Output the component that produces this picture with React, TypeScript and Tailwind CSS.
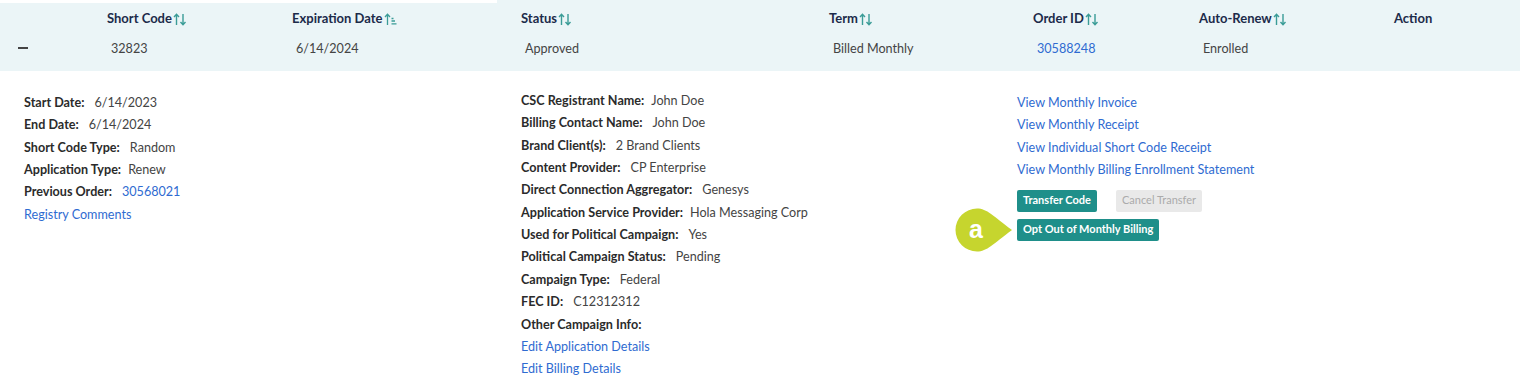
import React from "react";

const font = { fontFamily: 'Lato, "Liberation Sans", Arial, sans-serif' };

function SortBoth() {
  return (
    <svg width="14" height="13" viewBox="0 0 14 13" className="ml-[1px] inline-block" fill="none" stroke="#3a9c97" strokeWidth="1.4">
      <path d="M3.5 12V1.5M1 4l2.5-2.7L6 4" />
      <path d="M10 1v10.5M7.5 9l2.5 2.7L12.5 9" />
    </svg>
  );
}

function SortAsc() {
  return (
    <svg width="14" height="13" viewBox="0 0 14 13" className="ml-[1px] inline-block" fill="none" stroke="#3a9c97" strokeWidth="1.3">
      <path d="M3.5 12V1.5M1 4l2.5-2.7L6 4" />
      <path d="M7.5 5.5h2M7.5 8h3.5M7.5 10.8h5" />
    </svg>
  );
}

function Header({ label, sort }: { label: string; sort?: "both" | "asc" }) {
  return (
    <div className="flex items-center text-[13px] font-bold text-[#1c2b4a]">
      <span>{label}</span>
      {sort === "both" && <SortBoth />}
      {sort === "asc" && <SortAsc />}
    </div>
  );
}

function Field({ label, value, link, gap = 7 }: { label: string; value?: string; link?: boolean; gap?: number }) {
  return (
    <div className="h-[22.4px] flex items-center text-[12.6px]">
      <span className="font-bold text-[#2b2b2b]">{label}</span>
      {value && (
        <span
          className={gap === 10 ? "ml-[10px] " + (link ? "text-[#2f6bd1]" : "text-[#444]") : "ml-[7px] " + (link ? "text-[#2f6bd1]" : "text-[#444]")}
        >
          {value}
        </span>
      )}
    </div>
  );
}

function LinkRow({ text }: { text: string }) {
  return <div className="h-[22.4px] flex items-center text-[12.6px] text-[#2f6bd1]">{text}</div>;
}

export default function App() {
  return (
    <div className="w-[1520px] h-[382px] bg-white overflow-hidden relative" style={font}>
      <div className="bg-[#ebf5f7]">
        <div className="h-[3px] w-[497px] bg-white" />
        <div className="grid grid-cols-[107px_185px_229px_308px_204px_166px_195px_1fr] h-[32px] items-center">
          <div />
          <Header label="Short Code" sort="both" />
          <Header label="Expiration Date" sort="asc" />
          <Header label="Status" sort="both" />
          <Header label="Term" sort="both" />
          <Header label="Order ID" sort="both" />
          <Header label="Auto-Renew" sort="both" />
          <Header label="Action" />
        </div>
        <div className="grid grid-cols-[107px_185px_229px_308px_204px_166px_195px_1fr] h-[36px] items-start pt-[5px] text-[12.6px] text-[#444]">
          <div className="pl-[18px] pt-[7px]">
            <div className="w-[10px] h-[1.5px] bg-[#444]" />
          </div>
          <div className="pl-[4px]">32823</div>
          <div className="pl-[4px]">6/14/2024</div>
          <div className="pl-[4px]">Approved</div>
          <div className="pl-[4px]">Billed Monthly</div>
          <div className="pl-[4px] text-[#2f6bd1]">30588248</div>
          <div className="pl-[4px]">Enrolled</div>
          <div />
        </div>
      </div>

      <div className="flex pt-[19px]">
        <div className="w-[497px] pl-[24px] pt-[2px]">
          <Field label="Start Date:" value="6/14/2023" gap={10} />
          <Field label="End Date:" value="6/14/2024" gap={10} />
          <Field label="Short Code Type:" value="Random" gap={10} />
          <Field label="Application Type:" value="Renew" />
          <Field label="Previous Order:" value="30568021" link gap={10} />
          <LinkRow text="Registry Comments" />
        </div>
        <div className="w-[496px] pl-[24px]">
          <Field label="CSC Registrant Name:" value="John Doe" />
          <Field label="Billing Contact Name:" value="John Doe" gap={10} />
          <Field label="Brand Client(s):" value="2 Brand Clients" gap={10} />
          <Field label="Content Provider:" value="CP Enterprise" gap={10} />
          <Field label="Direct Connection Aggregator:" value="Genesys" gap={10} />
          <Field label="Application Service Provider:" value="Hola Messaging Corp" />
          <Field label="Used for Political Campaign:" value="Yes" gap={10} />
          <Field label="Political Campaign Status:" value="Pending" gap={10} />
          <Field label="Campaign Type:" value="Federal" gap={10} />
          <Field label="FEC ID:" value="C12312312" gap={10} />
          <Field label="Other Campaign Info:" />
          <LinkRow text="Edit Application Details" />
          <LinkRow text="Edit Billing Details" />
        </div>
        <div className="pl-[24px] pt-[2px]">
          <LinkRow text="View Monthly Invoice" />
          <LinkRow text="View Monthly Receipt" />
          <LinkRow text="View Individual Short Code Receipt" />
          <LinkRow text="View Monthly Billing Enrollment Statement" />
          <div className="flex gap-[19px] mt-[8px]">
            <div className="h-[22px] px-[6px] flex items-center rounded-[2px] bg-[#1f8f8a] text-white text-[11px] font-bold">Transfer Code</div>
            <div className="h-[22px] px-[6px] flex items-center rounded-[2px] bg-[#e9e9e9] text-[#ababab] text-[11px]">Cancel Transfer</div>
          </div>
          <div className="flex mt-[7px]">
            <div className="relative h-[22px] px-[6px] flex items-center rounded-[2px] bg-[#1f8f8a] text-white text-[11px] font-bold">
              Opt Out of Monthly Billing
              <div className="absolute left-[-62px] top-[-11px] w-[60px] h-[44px]">
                <svg width="60" height="44" viewBox="0 0 60 44">
                  <path d="M22 0.5C32 0.5 38 8 57 22C38 36 32 43.5 22 43.5A21.5 21.5 0 0 1 22 0.5Z" fill="#c6d52e" />
                </svg>
                <span className="absolute left-[14px] top-[7px] text-white text-[25px] leading-[28px]" style={{ fontFamily: '"Liberation Sans", Arial, sans-serif' }}>a</span>
              </div>
            </div>
          </div>
        </div>
      </div>
    </div>
  );
}
